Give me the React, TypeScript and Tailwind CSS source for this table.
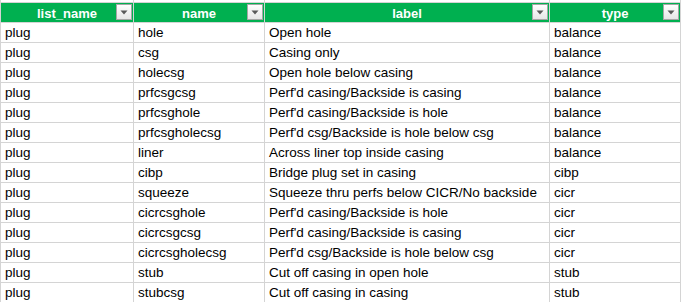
import React from "react";

const rows: [string, string, string, string][] = [
  ["plug", "hole", "Open hole", "balance"],
  ["plug", "csg", "Casing only", "balance"],
  ["plug", "holecsg", "Open hole below casing", "balance"],
  ["plug", "prfcsgcsg", "Perf'd casing/Backside is casing", "balance"],
  ["plug", "prfcsghole", "Perf'd casing/Backside is hole", "balance"],
  ["plug", "prfcsgholecsg", "Perf'd csg/Backside is hole below csg", "balance"],
  ["plug", "liner", "Across liner top inside casing", "balance"],
  ["plug", "cibp", "Bridge plug set in casing", "cibp"],
  ["plug", "squeeze", "Squeeze thru perfs below CICR/No backside", "cicr"],
  ["plug", "cicrcsghole", "Perf'd casing/Backside is hole", "cicr"],
  ["plug", "cicrcsgcsg", "Perf'd casing/Backside is casing", "cicr"],
  ["plug", "cicrcsgholecsg", "Perf'd csg/Backside is hole below csg", "cicr"],
  ["plug", "stub", "Cut off casing in open hole", "stub"],
  ["plug", "stubcsg", "Cut off casing in casing", "stub"],
];

const headers = ["list_name", "name", "label", "type"];
const cols = "grid grid-cols-[133px_131px_285px_131px]";

function FilterButton() {
  return (
    <div className="absolute right-[1px] top-[1px] w-[16px] h-[16px] border border-[#a6a6a6] bg-gradient-to-b from-white to-[#e6e6e6] flex items-center justify-center">
      <svg width="8" height="5" viewBox="0 0 8 5">
        <polygon points="0.5,0.5 7.5,0.5 4,4.5" fill="#595959" />
      </svg>
    </div>
  );
}

export default function App() {
  return (
    <div
      className="w-[683px] h-[302px] overflow-hidden bg-white"
      style={{ fontFamily: '"Liberation Sans", Arial, sans-serif' }}
    >
      <div className="border-l border-[#d4d4d4] w-fit">
        {/* top strip */}
        <div className={`${cols} h-[3px] border-b border-[#d4d4d4]`}>
          {headers.map((h) => (
            <div key={h} className="border-r border-[#d4d4d4]" />
          ))}
        </div>
        {/* header */}
        <div className={`${cols} h-[20px] border-b border-[#d4d4d4] bg-[#00b050]`}>
          {headers.map((h) => (
            <div
              key={h}
              className="relative border-r border-[#d4d4d4] flex items-center justify-center text-white font-bold text-[13px] leading-none"
            >
              <span className="mt-[1px]">{h}</span>
              <FilterButton />
            </div>
          ))}
        </div>
        {rows.map((r, i) => (
          <div key={i} className={`${cols} h-[20px] border-b border-[#d4d4d4]`}>
            {r.map((c, j) => (
              <div
                key={j}
                className="border-r border-[#d4d4d4] pl-[4px] flex items-center text-[13.5px] leading-none text-black whitespace-nowrap overflow-hidden"
              >
                <span className="mt-[1px]">{c}</span>
              </div>
            ))}
          </div>
        ))}
      </div>
    </div>
  );
}
